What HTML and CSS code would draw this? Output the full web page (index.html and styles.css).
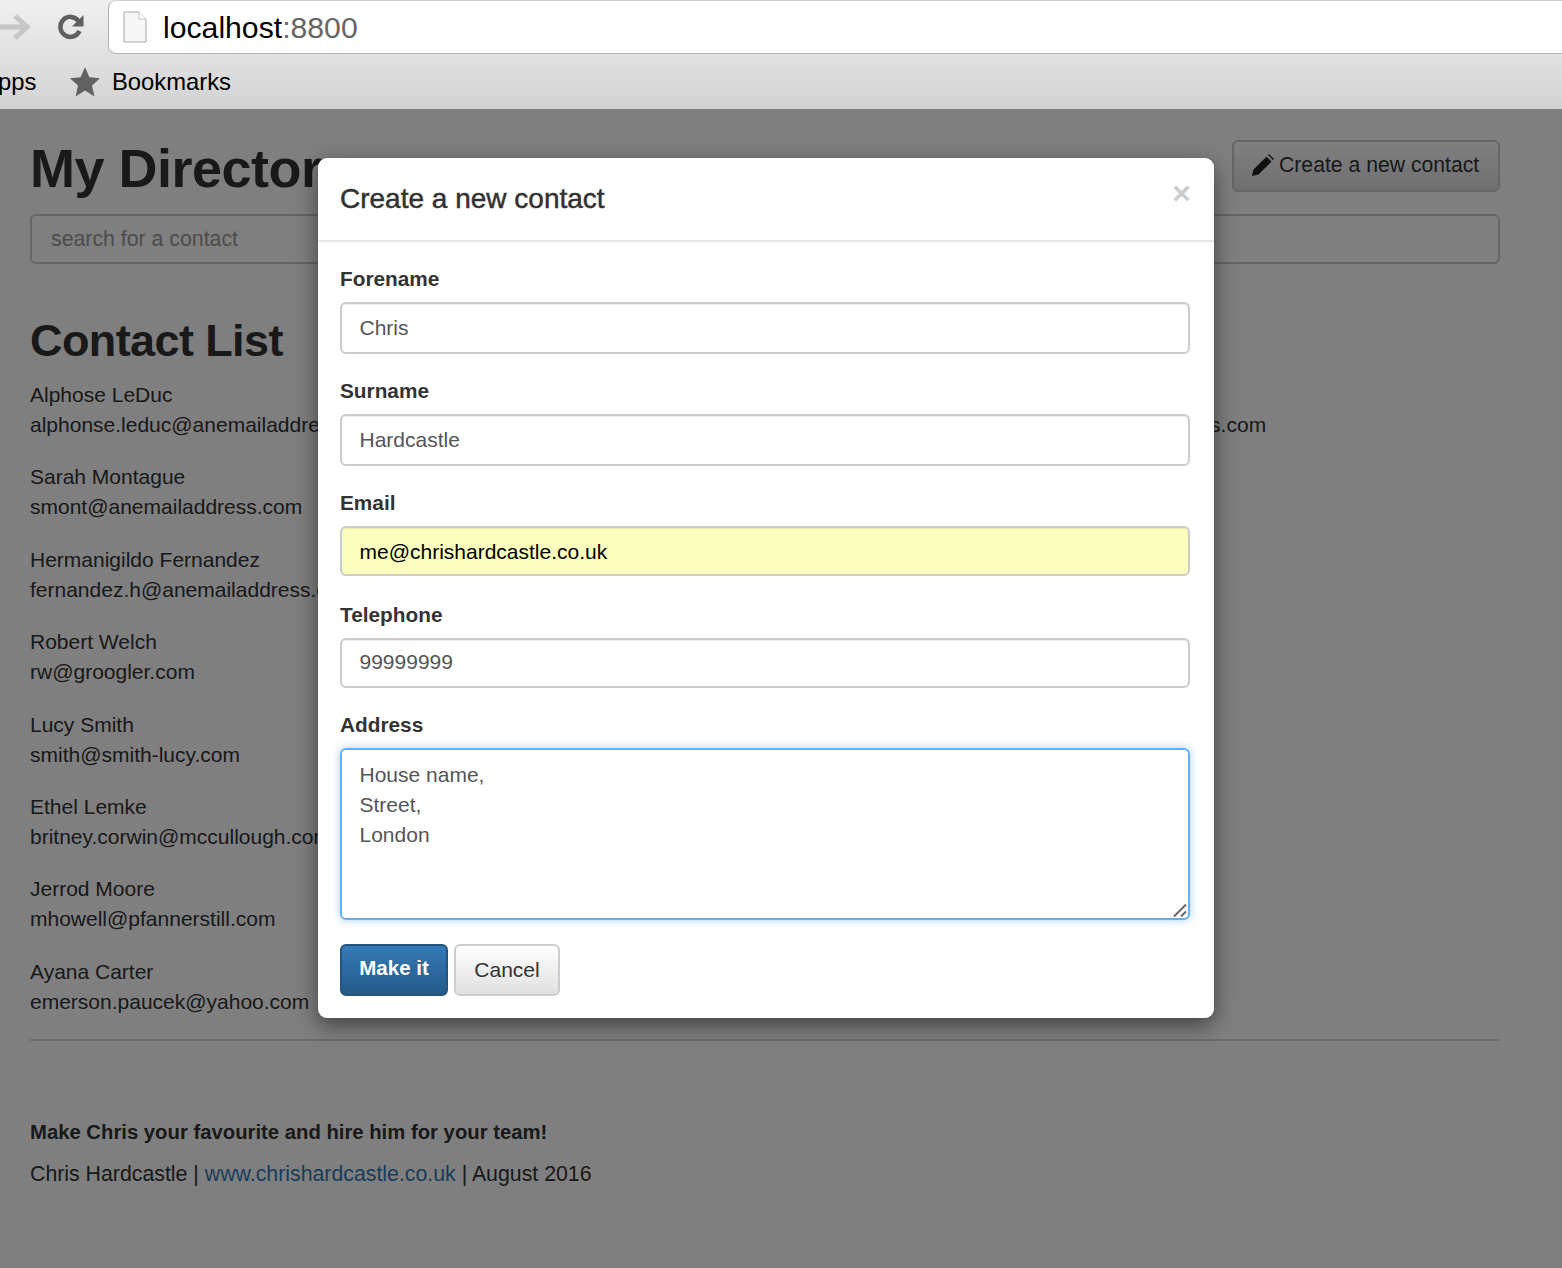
FILE: index.html
```html
<!DOCTYPE html>
<html lang="en">
<head>
  <meta charset="UTF-8" />
  <title>My Directory</title>
  <link rel="stylesheet" href="styles.css">
</head>
<body>
  <div class="chrome">
    <div class="toolbar">
      <svg class="arrow" width="32" height="28" viewBox="0 0 32 28"><path d="M0 14H28M17 3l12 11-12 11" fill="none" stroke="#c6c6c6" stroke-width="5"/></svg>
      <svg class="reload" width="30" height="30" viewBox="0 0 30 30"><path d="M23.500 19a10 10 0 1 1-1-10" fill="none" stroke="#5f5f5f" stroke-width="4.500"/><path d="M27.500 3v11.500H16z" fill="#5f5f5f"/></svg>
      <div class="omnibox">
        <svg class="page-icon" width="24" height="32" viewBox="0 0 24 32"><path d="M1 1h15l7 7v23H1z" fill="#f6f6f6" stroke="#a8a8a8"/><path d="M16 1v7h7" fill="#fff" stroke="#c4c4c4"/></svg>
        <span class="host">localhost<span class="port">:8800</span></span>
      </div>
    </div>
    <div class="bookmarks">
      <span class="apps">pps</span>
      <svg class="star" width="30" height="30" viewBox="0 0 30 30"><path d="M15 0l4.400 10.300 10.600.9-8 7.200 2.400 11L15 23.600 5.600 29.400l2.400-11-8-7.200 10.600-.9z" fill="#626262"/></svg>
      <span>Bookmarks</span>
    </div>
  </div>

  <div class="page">
    <div class="top-row">
      <h1>My Directory</h1>
      <a class="btn-new">
        <svg width="22" height="22" viewBox="0 0 22 22"><path d="M0 22l1.500-6.500L14.500 2.500l5 5L6.500 20.500zM16 1l1-1 5 5-1 1z" fill="#222"/></svg>
        Create a new contact
      </a>
    </div>
    <div class="search">search for a contact</div>

    <h2>Contact List</h2>
    <div class="contacts">
      <div class="contact-row">
        <p>Alphose LeDuc<br>alphonse.leduc@anemailaddress.com</p>
        <p>Tom Jones<br>tom.jones@anemailaddress.com</p>
      </div>
      <p>Sarah Montague<br>smont@anemailaddress.com</p>
      <p>Hermanigildo Fernandez<br>fernandez.h@anemailaddress.com</p>
      <p>Robert Welch<br>rw@groogler.com</p>
      <p>Lucy Smith<br>smith@smith-lucy.com</p>
      <p>Ethel Lemke<br>britney.corwin@mccullough.com</p>
      <p>Jerrod Moore<br>mhowell@pfannerstill.com</p>
      <p>Ayana Carter<br>emerson.paucek@yahoo.com</p>
    </div>
    <hr>
    <p class="hire">Make Chris your favourite and hire him for your team!</p>
    <p class="credit">Chris Hardcastle | <a>www.chrishardcastle.co.uk</a> | August 2016</p>
  </div>

  <div class="backdrop"></div>

  <div class="modal">
    <div class="modal-header">
      <h4>Create a new contact</h4>
      <span class="close">×</span>
    </div>
    <form class="modal-body">
      <label>Forename</label>
      <div class="field">Chris</div>
      <label>Surname</label>
      <div class="field">Hardcastle</div>
      <label>Email</label>
      <div class="field autofill">me@chrishardcastle.co.uk</div>
      <label>Telephone</label>
      <div class="field tel">99999999</div>
      <label>Address</label>
      <div class="field area">House name,<br>Street,<br>London
        <svg class="grip" width="16" height="16" viewBox="0 0 16 16"><path d="M2 14.500L14 2.500M9 14.500l5-5" stroke="#666" stroke-width="2"/></svg>
      </div>
      <div class="buttons">
        <a class="btn primary">Make it</a>
        <a class="btn cancel">Cancel</a>
      </div>
    </form>
  </div>
</body>
</html>
```

FILE: styles.css
```css
* {
  box-sizing: border-box;
}
html, body {
  margin: 0;
  height: 1268px;
  overflow: hidden;
}
body {
  font-family: "Liberation Sans", Arial, sans-serif;
  font-size: 21px;
  line-height: 30px;
  color: #333;
  background: #fff;
  position: relative;
}

/* browser chrome */
.chrome {
  height: 109px;
  background: linear-gradient(#f0f0f0, #d2d2d2);
  position: relative;
  z-index: 3;
  overflow: hidden;
}
.toolbar {
  height: 54px;
  display: flex;
  align-items: center;
}
.arrow {
  margin-left: -2px;
}
.reload {
  margin-left: 26px;
}
.omnibox {
  margin-left: 22px;
  flex: 1;
  height: 54px;
  margin-right: -10px;
  background: #fff;
  border: 1px solid #b4b4b4;
  border-top-color: #d0d0d0;
  border-radius: 8px;
  display: flex;
  align-items: center;
  padding-left: 14px;
}
.host {
  margin-left: 16px;
  margin-top: 2px;
  font-size: 30.200px;
  color: #000;
}
.port {
  color: #666;
}
.bookmarks {
  height: 55px;
  display: flex;
  align-items: center;
  font-size: 23.800px;
  color: #000;
}
.apps {
  margin-left: -2px;
  width: 72px;
}
.star {
  margin-right: 12px;
}

/* page behind the dialog */
.page {
  padding: 0 62px 0 30px;
}
.top-row {
  display: flex;
  justify-content: space-between;
  align-items: flex-start;
  padding-top: 31px;
  height: 105px;
}
h1 {
  margin: -2px 0 0;
  font-size: 54px;
  line-height: 60px;
  font-weight: bold;
  letter-spacing: -0.5px;
}
.btn-new {
  width: 268px;
  height: 52px;
  display: flex;
  align-items: center;
  gap: 5px;
  padding-left: 18px;
  padding-bottom: 2px;
  font-size: 21.200px;
  border: 2px solid #ccc;
  border-radius: 6px;
  background: linear-gradient(#fff, #e0e0e0);
}
.search {
  height: 50px;
  border: 2px solid #ccc;
  border-radius: 6px;
  padding: 8px 19px;
  color: #999;
  font-size: 21.300px;
}
h2 {
  margin: 50px 0 0;
  font-size: 45px;
  line-height: 54px;
  font-weight: bold;
  letter-spacing: -0.6px;
}
.contacts {
  margin-top: 12px;
}
.contacts p {
  margin: 0 0 22.400px;
}
.contact-row {
  display: grid;
  grid-template-columns: 930px 1fr;
}
hr {
  margin: 9.300px 0 0;
  border: 0;
  border-top: 2px solid #ddd;
}
.hire {
  margin: 76px 0 0;
  font-weight: bold;
  font-size: 20.300px;
}
.credit {
  margin: 12px 0 0;
  font-size: 21.300px;
}
.credit a {
  color: #337ab7;
}
.backdrop {
  position: absolute;
  left: 0;
  right: 0;
  top: 109px;
  bottom: 0;
  background: rgba(0, 0, 0, 0.5);
  z-index: 1;
}

/* dialog */
.modal {
  position: absolute;
  left: 318px;
  top: 158px;
  width: 896px;
  height: 860px;
  background: #fff;
  border-radius: 9px;
  box-shadow: 0 7px 22px rgba(0, 0, 0, 0.5);
  z-index: 2;
}
.modal-header {
  height: 84px;
  border-bottom: 2px solid #e5e5e5;
  padding: 0 22px;
  display: flex;
  justify-content: space-between;
}
h4 {
  margin: 0;
  padding-top: 25px;
  font-size: 28px;
  line-height: 32px;
  font-weight: 500;
  color: #333;
  -webkit-text-stroke: 0.5px #333;
}
.close {
  font-size: 32px;
  font-weight: bold;
  color: #ccc;
  margin-top: 20px;
  margin-right: 1px;
}
.modal-body {
  padding: 22px 24px 0 22px;
}
label {
  display: block;
  font-weight: bold;
  height: 38px;
  line-height: 30px;
  font-size: 20.800px;
}
.field {
  height: 52px;
  margin-bottom: 22px;
  border: 2px solid #ccc;
  border-radius: 6px;
  padding: 9px 17.500px;
  color: #555;
  box-shadow: inset 0 1px 1px rgba(0, 0, 0, 0.075);
}
.autofill {
  height: 50px;
  margin-bottom: 24px;
  background: #fbffbd;
  color: #000;
}
.tel {
  height: 50px;
  padding-top: 7px;
}
.field.area {
  height: 172px;
  position: relative;
  padding-top: 10px;
  border-color: #66afe9;
  box-shadow: 0 0 8px rgba(102, 175, 233, 0.6);
  margin-bottom: 24px;
}
.grip {
  position: absolute;
  right: 0;
  bottom: 0;
}
.buttons {
  display: flex;
  gap: 6px;
}
.btn {
  height: 52px;
  border-radius: 6px;
  text-align: center;
  line-height: 48px;
}
.primary {
  width: 108px;
  color: #fff;
  font-weight: bold;
  font-size: 20.500px;
  line-height: 44px;
  background: linear-gradient(#337ab7, #265a88);
  border: 2px solid #245580;
}
.cancel {
  width: 106px;
  border: 2px solid #ccc;
  background: linear-gradient(#fff, #e0e0e0);
}
```
